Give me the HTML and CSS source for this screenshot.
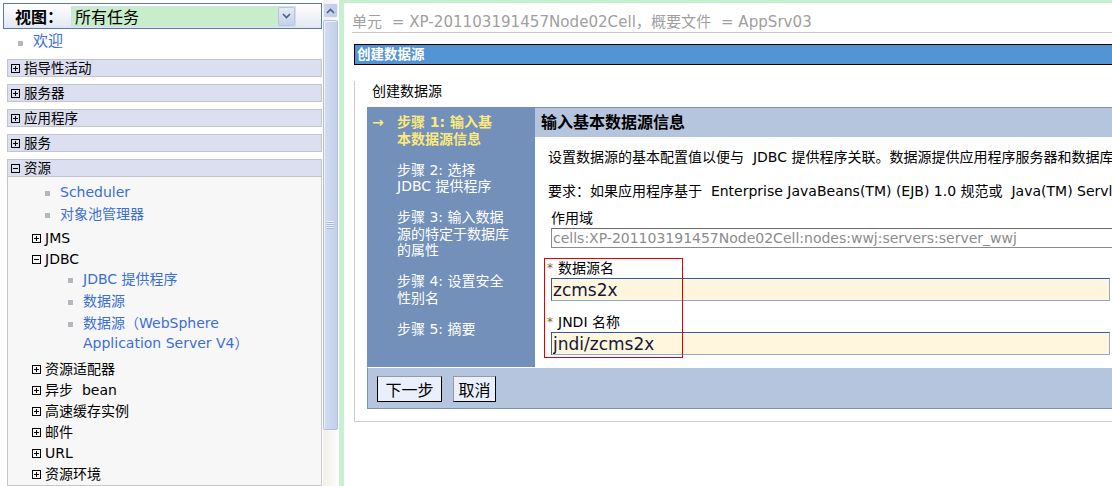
FILE: index.html
```html
<!DOCTYPE html>
<html>
  <head>
    <meta charset="utf-8" />
    <title>创建数据源</title>
    <link rel="stylesheet" href="styles.css">
  </head>
  <body>
    <div class="navframe">
      <div class="navmain">
        <div class="viewbar">
          <span class="viewlabel">视图：</span>
          <div class="viewselect">
            <span>所有任务</span>
            <span class="dropbtn">
              <svg width="9" height="6" viewBox="0 0 9 6"><polyline points="1,1 4.5,4.5 8,1" fill="none" stroke="#4d5f85" stroke-width="1.6" /></svg>
            </span>
          </div>
        </div>
        <ul class="welcome">
          <li><span class="bullet"></span><a href="#">欢迎</a></li>
        </ul>
        <div class="section"><svg class="toggle" width="9" height="9" viewBox="0 0 9 9" shape-rendering="crispEdges"><rect x="0.5" y="0.5" width="8" height="8" fill="none" stroke="#000" /><path d="M2 4.5h5M4.5 2v5" stroke="#000" /></svg>指导性活动</div>
        <div class="section"><svg class="toggle" width="9" height="9" viewBox="0 0 9 9" shape-rendering="crispEdges"><rect x="0.5" y="0.5" width="8" height="8" fill="none" stroke="#000" /><path d="M2 4.5h5M4.5 2v5" stroke="#000" /></svg>服务器</div>
        <div class="section"><svg class="toggle" width="9" height="9" viewBox="0 0 9 9" shape-rendering="crispEdges"><rect x="0.5" y="0.5" width="8" height="8" fill="none" stroke="#000" /><path d="M2 4.5h5M4.5 2v5" stroke="#000" /></svg>应用程序</div>
        <div class="section"><svg class="toggle" width="9" height="9" viewBox="0 0 9 9" shape-rendering="crispEdges"><rect x="0.5" y="0.5" width="8" height="8" fill="none" stroke="#000" /><path d="M2 4.5h5M4.5 2v5" stroke="#000" /></svg>服务</div>
        <div class="section open"><svg class="toggle" width="9" height="9" viewBox="0 0 9 9" shape-rendering="crispEdges"><rect x="0.5" y="0.5" width="8" height="8" fill="none" stroke="#000" /><path d="M2 4.5h5" stroke="#000" /></svg>资源</div>
        <div class="sectionbody">
          <ul class="links">
            <li><span class="bullet"></span><a href="#">Scheduler</a></li>
            <li><span class="bullet"></span><a href="#">对象池管理器</a></li>
          </ul>
          <ul class="tree">
            <li><div class="nodehead"><svg class="toggle" width="9" height="9" viewBox="0 0 9 9" shape-rendering="crispEdges"><rect x="0.5" y="0.5" width="8" height="8" fill="none" stroke="#000" /><path d="M2 4.5h5M4.5 2v5" stroke="#000" /></svg>JMS</div></li>
            <li>
              <div class="nodehead"><svg class="toggle" width="9" height="9" viewBox="0 0 9 9" shape-rendering="crispEdges"><rect x="0.5" y="0.5" width="8" height="8" fill="none" stroke="#000" /><path d="M2 4.5h5" stroke="#000" /></svg>JDBC</div>
              <ul class="links sub">
                <li><span class="bullet"></span><a href="#">JDBC 提供程序</a></li>
                <li><span class="bullet"></span><a href="#">数据源</a></li>
                <li><span class="bullet"></span><a href="#">数据源（WebSphere<br>Application Server V4）</a></li>
              </ul>
            </li>
            <li><div class="nodehead"><svg class="toggle" width="9" height="9" viewBox="0 0 9 9" shape-rendering="crispEdges"><rect x="0.5" y="0.5" width="8" height="8" fill="none" stroke="#000" /><path d="M2 4.5h5M4.5 2v5" stroke="#000" /></svg>资源适配器</div></li>
            <li><div class="nodehead"><svg class="toggle" width="9" height="9" viewBox="0 0 9 9" shape-rendering="crispEdges"><rect x="0.5" y="0.5" width="8" height="8" fill="none" stroke="#000" /><path d="M2 4.5h5M4.5 2v5" stroke="#000" /></svg>异步&nbsp; bean</div></li>
            <li><div class="nodehead"><svg class="toggle" width="9" height="9" viewBox="0 0 9 9" shape-rendering="crispEdges"><rect x="0.5" y="0.5" width="8" height="8" fill="none" stroke="#000" /><path d="M2 4.5h5M4.5 2v5" stroke="#000" /></svg>高速缓存实例</div></li>
            <li><div class="nodehead"><svg class="toggle" width="9" height="9" viewBox="0 0 9 9" shape-rendering="crispEdges"><rect x="0.5" y="0.5" width="8" height="8" fill="none" stroke="#000" /><path d="M2 4.5h5M4.5 2v5" stroke="#000" /></svg>邮件</div></li>
            <li><div class="nodehead"><svg class="toggle" width="9" height="9" viewBox="0 0 9 9" shape-rendering="crispEdges"><rect x="0.5" y="0.5" width="8" height="8" fill="none" stroke="#000" /><path d="M2 4.5h5M4.5 2v5" stroke="#000" /></svg>URL</div></li>
            <li><div class="nodehead"><svg class="toggle" width="9" height="9" viewBox="0 0 9 9" shape-rendering="crispEdges"><rect x="0.5" y="0.5" width="8" height="8" fill="none" stroke="#000" /><path d="M2 4.5h5M4.5 2v5" stroke="#000" /></svg>资源环境</div></li>
          </ul>
        </div>
      </div>
      <div class="scrollbar">
        <div class="sbup">
          <svg width="9" height="6" viewBox="0 0 9 6"><polyline points="1,5 4.5,1.5 8,5" fill="none" stroke="#4d5f85" stroke-width="1.6" /></svg>
        </div>
        <div class="sbthumb"><span class="grip"></span></div>
      </div>
    </div>

    <div class="mainframe">
      <div class="crumb">单元 &nbsp;= XP-201103191457Node02Cell，概要文件 &nbsp;= AppSrv03</div>
      <div class="panel">
        <div class="panelhead">创建数据源</div>
        <div class="panelbody">
          <div class="subtitle">创建数据源</div>
          <div class="wizard">
            <div class="wizrow">
              <div class="steps">
                <div class="step current"><span class="mark">→</span><span>步骤 1: 输入基<br>本数据源信息</span></div>
                <div class="step"><span class="mark"></span><span>步骤 2: 选择<br>JDBC 提供程序</span></div>
                <div class="step"><span class="mark"></span><span>步骤 3: 输入数据<br>源的特定于数据库<br>的属性</span></div>
                <div class="step"><span class="mark"></span><span>步骤 4: 设置安全<br>性别名</span></div>
                <div class="step"><span class="mark"></span><span>步骤 5: 摘要</span></div>
              </div>
              <div class="stepcontent">
                <div class="stephead">输入基本数据源信息</div>
                <div class="fields">
                  <p class="intro">设置数据源的基本配置值以便与 &nbsp;JDBC 提供程序关联。数据源提供应用程序服务器和数据库之间的连接。</p>
                  <p class="note">要求：如果应用程序基于 &nbsp;Enterprise JavaBeans(TM) (EJB) 1.0 规范或 &nbsp;Java(TM) Servlet 2.2 规范，请创建 WebSphere Application Server V4 数据源。</p>
                  <div class="label plain">作用域</div>
                  <input class="readonly" type="text" value="cells:XP-201103191457Node02Cell:nodes:wwj:servers:server_wwj" readonly />
                  <div class="required">
                    <div class="label"><span class="star">*</span>数据源名</div>
                    <input class="entry" type="text" value="zcms2x" />
                    <div class="label second"><span class="star">*</span>JNDI 名称</div>
                    <input class="entry" type="text" value="jndi/zcms2x" />
                    <div class="highlight"></div>
                  </div>
                </div>
              </div>
            </div>
            <div class="buttons">
              <button class="btn next">下一步</button>
              <button class="btn cancel">取消</button>
            </div>
          </div>
        </div>
      </div>
    </div>
  </body>
</html>
```

FILE: styles.css
```css
html,
body {
  margin: 0;
  height: 100%;
}
body {
  display: flex;
  overflow: hidden;
  background-color: #c8efcf;
  color: #000;
  font-family: "DejaVu Sans", "Noto Sans CJK SC", sans-serif;
  font-size: 14px;
}
a {
  color: #3c6fd6;
  text-decoration: none;
}
ul {
  list-style: none;
  margin: 0;
}

/* left navigation frame */
.navframe {
  display: flex;
  flex: none;
  width: 339px;
  background-color: #fff;
}
.navmain {
  display: flex;
  flex-direction: column;
  width: 323px;
}
.viewbar {
  display: flex;
  align-items: center;
  box-sizing: border-box;
  width: 319px;
  height: 26px;
  margin: 3px 0 0 3px;
  padding-left: 11px;
  border: 1px solid #5b7aa8;
  background: linear-gradient(to bottom, #ffffff, #e1e7f3);
}
.viewlabel {
  flex: none;
  width: 56px;
  font-size: 16px;
  font-weight: bold;
}
.viewselect {
  display: flex;
  align-items: center;
  justify-content: space-between;
  box-sizing: border-box;
  width: 225px;
  height: 21px;
  padding-left: 3px;
  border: 1px solid #d4dde9;
  background-color: #c8edca;
  font-size: 16px;
}
.dropbtn {
  display: flex;
  align-items: center;
  justify-content: center;
  box-sizing: border-box;
  width: 17px;
  height: 19px;
  border: 1px solid #b9c6e0;
  border-radius: 2px;
  background: linear-gradient(to bottom, #e4ebf8, #c4d0ea);
}
.welcome {
  margin-top: 2px;
  padding-left: 18px;
}
.welcome li {
  display: flex;
  align-items: flex-start;
  line-height: 20px;
  font-size: 15px;
}
.bullet {
  flex: none;
  width: 5px;
  height: 5px;
  margin: 9px 10px 0 0;
  background-color: #b6b6c0;
}
.welcome .bullet {
  margin-top: 10px;
}
.section {
  display: flex;
  align-items: center;
  box-sizing: border-box;
  width: 315px;
  height: 18px;
  margin: 0 0 7px 7px;
  padding-left: 3px;
  border: 1px solid #c4c4cc;
  background-color: #dcdfef;
  font-size: 13.5px;
  line-height: 16px;
}
.welcome + .section {
  margin-top: 8px;
}
.section.open {
  margin-bottom: 0;
}
.toggle {
  flex: none;
  margin-right: 4px;
}
.sectionbody {
  flex: 1;
  box-sizing: border-box;
  width: 315px;
  margin-left: 7px;
  padding-top: 5px;
  border: 1px solid #c8c8c8;
  border-top: none;
  background-color: #f7f7f7;
}
.links {
  padding-left: 37px;
}
.links li {
  display: flex;
  align-items: flex-start;
  margin-top: 2px;
  line-height: 20px;
}
.links li:first-child {
  margin-top: 0;
}
.links.sub {
  margin-bottom: 6px;
  padding-left: 36px;
}
.tree {
  margin-top: 4px;
  padding-left: 24px;
}
.tree > li {
  margin-top: 1px;
}
.tree > li:first-child {
  margin-top: 0;
}
.nodehead {
  display: flex;
  align-items: center;
  height: 20px;
  line-height: 20px;
}

/* scrollbar of the navigation frame */
.scrollbar {
  flex: none;
  width: 15px;
  padding-top: 3px;
  background: linear-gradient(to right, #f1efe8, #fdfdfb);
}
.sbup {
  display: flex;
  align-items: center;
  justify-content: center;
  box-sizing: border-box;
  height: 15px;
  border: 1px solid #eef2fa;
  border-radius: 2px;
  background: linear-gradient(to right, #ccd7ef, #bfcbe8);
}
.sbthumb {
  display: flex;
  align-items: center;
  justify-content: center;
  box-sizing: border-box;
  height: 410px;
  margin-top: 2px;
  border: 1px solid #b1bedd;
  border-radius: 2px;
  background: linear-gradient(to right, #d3dcf2, #c3cfea);
  box-shadow: inset 1px 1px 0 #eef2fa;
}
.grip {
  width: 7px;
  height: 8px;
  background: repeating-linear-gradient(to bottom, #eef2fb 0 1px, #a9b9dd 1px 2px);
}

/* right content frame */
.mainframe {
  flex: 1;
  min-width: 0;
  margin: 3px 0 0 5px;
  padding-left: 8px;
  overflow: hidden;
  background-color: #fff;
}
.crumb {
  margin-top: 9px;
  border-bottom: 1px solid #c8c8c8;
  color: #a0a0a0;
  font-size: 15.1px;
  line-height: 20px;
  white-space: nowrap;
}
.panel {
  width: 900px;
  margin: 11px 0 0 2px;
}
.panelhead {
  box-sizing: border-box;
  height: 21px;
  padding-left: 2px;
  border: 1px solid #000;
  background-color: #5294d4;
  color: #fff;
  font-size: 13.5px;
  font-weight: bold;
  line-height: 19px;
}
.panelbody {
  padding: 0 12px 12px;
  border: 1px solid #cccccc;
  border-top: none;
}
.subtitle {
  margin: 16px 0 0 5px;
  line-height: 20px;
}
.wizard {
  margin-top: 6px;
}
.wizrow {
  display: flex;
}
.steps {
  flex: none;
  box-sizing: border-box;
  width: 168px;
  padding: 7px 0 0 5px;
  background-color: #7290b9;
  color: #fff;
  line-height: 16.5px;
}
.step {
  display: flex;
  margin-bottom: 14.5px;
}
.step .mark {
  flex: none;
  width: 25px;
}
.step.current {
  color: #fbe97d;
  font-weight: bold;
}
.stepcontent {
  flex: 1;
  min-width: 0;
}
.stephead {
  height: 29px;
  padding-left: 6px;
  border-top: 1px solid #7b93bd;
  background-color: #b5c5de;
  font-size: 16px;
  font-weight: bold;
  line-height: 29px;
}
.fields {
  padding: 0 0 12px 12px;
}
.fields p {
  margin: 14px 0 0 1px;
  line-height: 20px;
  white-space: nowrap;
}
.fields p.intro {
  margin-top: 10px;
}
.label {
  display: flex;
  line-height: 18px;
}
.label.plain {
  margin-top: 8px;
  padding-left: 4px;
}
.label.second {
  margin-top: 12px;
}
.star {
  flex: none;
  width: 11px;
  color: #7a6a1e;
  font-size: 12px;
}
input.readonly {
  display: block;
  box-sizing: border-box;
  width: 620px;
  height: 20px;
  margin: 1px 0 0 4px;
  padding: 0 1px;
  border: 1px solid #8a8a8a;
  border-top-color: #6a6a6a;
  background-color: #fff;
  color: #8c8c8c;
  font-family: "DejaVu Sans", "Noto Sans CJK SC", sans-serif;
  font-size: 14px;
  outline: none;
}
.required {
  position: relative;
  margin-top: 10px;
  padding-top: 1px;
}
input.entry {
  display: block;
  box-sizing: border-box;
  width: 559px;
  height: 23px;
  margin: 1px 0 0 4px;
  padding: 0 1px;
  border: 1px solid #8aabd0;
  border-top-color: #2f5f9a;
  border-left-color: #2f5f9a;
  background-color: #fff6dd;
  color: #16163a;
  font-family: "DejaVu Sans", "Noto Sans CJK SC", sans-serif;
  font-size: 17px;
  outline: none;
}
/* red annotation frame drawn over the two fields */
.highlight {
  position: absolute;
  top: 0;
  left: -3px;
  box-sizing: border-box;
  width: 139px;
  height: 100px;
  border: 1px solid #e80000;
}
.buttons {
  display: flex;
  gap: 11px;
  padding: 8px 0 6px 9px;
  border-top: 1px solid #fff;
  border-left: 1px solid #7b93bd;
  border-bottom: 1px solid #7b93bd;
  background-color: #b5c5de;
}
.btn {
  box-sizing: border-box;
  height: 26px;
  padding: 0;
  border: 1px solid #000;
  border-top-color: #9a9a9a;
  background-color: #e9f0fb;
  color: #000;
  font-family: "Noto Sans CJK SC", sans-serif;
  font-size: 16px;
  line-height: 22px;
}
.btn.next {
  width: 65px;
}
.btn.cancel {
  width: 43px;
  border-left-color: #9a9a9a;
}
```
